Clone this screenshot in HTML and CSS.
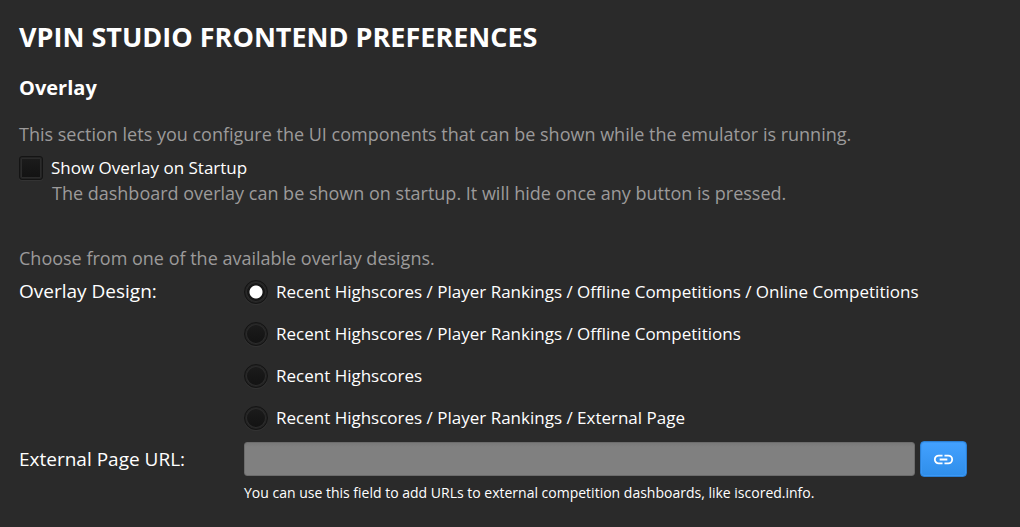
FILE: index.html
```html
<!DOCTYPE html>
<html lang="en">
<head>
<meta charset="utf-8">
<title>VPin Studio Frontend Preferences</title>
<link rel="stylesheet" href="styles.css">
</head>
<body>
<main class="preferences">
  <h1 class="title">VPIN STUDIO FRONTEND PREFERENCES</h1>
  <h2 class="section-title">Overlay</h2>
  <p class="description">This section lets you configure the UI components that can be shown while the emulator is running.</p>
  <label class="option"><input class="check" type="checkbox" aria-describedby="startup-hint"><span>Show Overlay on Startup</span></label>
  <p class="description hint" id="startup-hint">The dashboard overlay can be shown on startup. It will hide once any button is pressed.</p>
  <p class="description choose">Choose from one of the available overlay designs.</p>
  <form class="form">
    <span class="form-label" id="design-label">Overlay Design:</span>
    <div class="designs" role="radiogroup" aria-labelledby="design-label">
      <label class="option"><input class="radio" type="radio" name="design" checked><span>Recent Highscores / Player Rankings / Offline Competitions / Online Competitions</span></label>
      <label class="option"><input class="radio" type="radio" name="design"><span>Recent Highscores / Player Rankings / Offline Competitions</span></label>
      <label class="option"><input class="radio" type="radio" name="design"><span>Recent Highscores</span></label>
      <label class="option"><input class="radio" type="radio" name="design"><span>Recent Highscores / Player Rankings / External Page</span></label>
    </div>
    <label class="form-label url-label" for="url">External Page URL:</label>
    <div class="url">
      <div class="url-row">
        <input class="url-input" id="url" type="text" aria-describedby="url-note">
        <button class="link-button" type="button" aria-label="Open link">
          <svg class="link-icon" viewBox="0 0 24 24" aria-hidden="true"><path d="M3.900 12c0-1.710 1.390-3.100 3.100-3.100h4V7H7a5 5 0 0 0 0 10h4v-1.900H7c-1.710 0-3.100-1.390-3.100-3.100zM8 13h8v-2H8v2zm9-6h-4v1.900h4a3.100 3.100 0 0 1 0 6.200h-4V17h4a5 5 0 0 0 0-10z"/></svg>
        </button>
      </div>
      <p class="note" id="url-note">You can use this field to add URLs to external competition dashboards, like iscored.info.</p>
    </div>
  </form>
</main>
</body>
</html>
```
FILE: styles.css
```css
* { box-sizing: border-box; }
body {
  margin: 0;
  background: #2a2a2a;
  color: #fff;
  font-family: "Open Sans", "Noto Sans", sans-serif;
  font-size: 18px;
  line-height: 24px;
}
h1, h2, p { margin: 0; }
.preferences { padding: 20px 53px 12px 19px; }
.title { font-size: 27px; line-height: 34px; font-weight: 700; }
.section-title { margin-top: 20px; font-size: 20px; line-height: 28px; font-weight: 700; }
.description { margin-top: 20px; color: #9c9a9a; }
.preferences > .option { margin-top: 10px; }
.hint { margin-top: 1px; padding-left: 33px; }
.choose { margin-top: 41px; }
.option { display: flex; align-items: center; gap: 8px; font-size: 17px; }
.check, .radio {
  appearance: none;
  flex: none;
  width: 24px;
  height: 24px;
  margin: 0;
  border: 1px solid #141414;
  background: linear-gradient(#1c1c1c, #121212);
  box-shadow: inset 0 0 0 1px #232323, inset 0 0 0 2px #2b2b2b, 0 1px 0 #333;
}
.check { border-radius: 3px; }
.radio { border-radius: 50%; }
.radio:checked { background: radial-gradient(circle, #fff 6px, #161616 7px); }
.form {
  display: grid;
  grid-template-columns: 225px 1fr;
  row-gap: 11px;
  margin-top: 9px;
}
.form-label { font-size: 19px; }
.designs { display: grid; gap: 18px; padding-top: 1px; }
.url-label { padding-top: 6px; }
.url-row { display: flex; align-items: center; gap: 5px; }
.url-input {
  flex: 1;
  min-width: 0;
  height: 34px;
  padding: 0 8px;
  border: 1px solid #6c6c6c;
  border-radius: 3px;
  background: linear-gradient(#797979, #808080 4px);
  color: #fff;
  font: inherit;
}
.link-button {
  display: grid;
  place-items: center;
  width: 47px;
  height: 36px;
  padding: 0;
  border: 1px solid #2a7fd4;
  border-radius: 4px;
  background: linear-gradient(#43a1ff, #2f8eea);
  box-shadow: inset 0 0 0 1px #3b98f5;
}
.link-icon { width: 23px; height: 23px; fill: #fff; }
.note { margin-top: 5px; font-size: 14px; line-height: 22px; }
```
